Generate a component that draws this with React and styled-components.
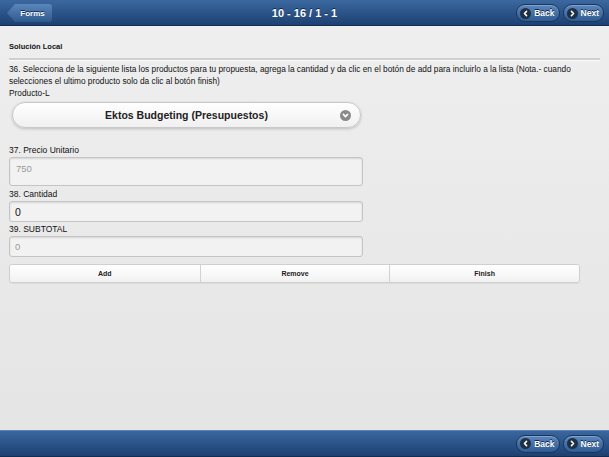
import React from 'react';
import styled, { createGlobalStyle } from 'styled-components';

const GlobalStyle = createGlobalStyle`
  html, body {
    margin: 0;
    padding: 0;
    height: 100%;
  }
  body {
    font-family: "Liberation Sans", Arial, sans-serif;
    background: #e9e9e9;
  }
  #root {
    height: 100%;
  }
`;

const Page = styled.div`
  width: 609px;
  height: 457px;
  display: flex;
  flex-direction: column;
  background: linear-gradient(#efefef, #e4e4e4);
  overflow: hidden;
`;

const Bar = styled.div`
  height: ${p => p.$footer ? '27px' : '26px'};
  flex-shrink: 0;
  display: flex;
  align-items: center;
  justify-content: ${p => p.$footer ? 'flex-end' : 'space-between'};
  padding: 0 5px 0 7px;
  background: linear-gradient(#3a679e, #1d4072);
  border-top: 1px solid ${p => p.$footer ? '#5a84b8' : '#3a679e'};
  border-bottom: 1px solid #132c52;
  box-sizing: border-box;
  position: relative;
`;

const Title = styled.div`
  position: absolute;
  left: 0;
  right: 0;
  text-align: center;
  color: #fff;
  font-weight: bold;
  font-size: 11px;
  text-shadow: 0 -1px 0 #0d2447;
  pointer-events: none;
`;

const BackTab = styled.div`
  position: relative;
  height: 18px;
  width: 45px;
  display: flex;
  align-items: center;
  justify-content: center;
  padding-left: 6px;
  box-sizing: border-box;
  color: #fff;
  font-size: 8px;
  font-weight: bold;
  text-shadow: 0 -1px 0 #0d2447;
  background: linear-gradient(#5a86bd, #2e5a90);
  border-radius: 0 3px 3px 0;
  clip-path: polygon(8px 0, 100% 0, 100% 100%, 8px 100%, 0 50%);
`;

const NavGroup = styled.div`
  display: flex;
  gap: 3px;
  z-index: 1;
`;

const Pill = styled.div`
  height: 18px;
  display: flex;
  align-items: center;
  gap: 3px;
  padding: 0 4px 0 3px;
  box-sizing: border-box;
  border-radius: 9px;
  background: linear-gradient(#5a86bd, #2f5c93);
  border: 1px solid #18365e;
  box-shadow: inset 0 1px 0 rgba(255,255,255,0.25);
  color: #fff;
  font-size: 8.5px;
  font-weight: bold;
  text-shadow: 0 -1px 0 #0d2447;
`;

const Dot = styled.span`
  width: 11px;
  height: 11px;
  border-radius: 50%;
  background: #1f2f45;
  display: flex;
  align-items: center;
  justify-content: center;
`;

const Content = styled.div`
  flex: 1;
  padding: 16px 9px 0 9px;
  color: #111;
`;

const Section = styled.div`
  font-size: 7.5px;
  font-weight: bold;
  padding: 0 0 7px 0;
  border-bottom: 2px solid #cfcfcf;
  box-shadow: 0 1px 0 #fafafa;
`;

const Question = styled.div`
  font-size: 8.3px;
  line-height: 12px;
  margin-top: 3px;
  white-space: nowrap;
`;

const Select = styled.div`
  margin: 3px 0 0 3px;
  width: 349px;
  height: 26px;
  box-sizing: border-box;
  border: 1px solid #c8c8c8;
  border-radius: 13px;
  background: linear-gradient(#ffffff, #f0f0f0);
  box-shadow: 0 1px 3px rgba(0,0,0,0.2);
  display: flex;
  align-items: center;
  justify-content: center;
  position: relative;
  font-size: 10.5px;
  font-weight: bold;
  color: #222;
`;

const Chevron = styled.span`
  position: absolute;
  right: 9px;
  top: 7px;
  width: 11px;
  height: 11px;
  border-radius: 50%;
  background: #8a8a8a;
  display: flex;
  align-items: center;
  justify-content: center;
`;

const Label = styled.div`
  font-size: 8.5px;
  margin-top: ${p => p.$mt || 0}px;
  line-height: 10px;
`;

const Input = styled.div`
  width: 354px;
  height: ${p => p.$h || 21}px;
  box-sizing: border-box;
  margin-top: 2px;
  border: 1px solid #c4c4c4;
  border-radius: 3px;
  background: #f2f2f2;
  box-shadow: inset 0 1px 2px rgba(0,0,0,0.12);
  display: flex;
  align-items: ${p => p.$top ? 'flex-start' : 'center'};
  padding: ${p => p.$top ? '5px 0 0 6px' : '0 0 0 5px'};
  font-size: ${p => p.$muted ? '9.5px' : '10.5px'};
  color: ${p => p.$muted ? '#9a9a9a' : '#111'};
`;

const ButtonRow = styled.div`
  margin-top: 7px;
  width: 569px;
  display: grid;
  grid-template-columns: repeat(3, 1fr);
  border: 1px solid #cfcfcf;
  border-radius: 3px;
  overflow: hidden;
  box-shadow: 0 1px 1px rgba(0,0,0,0.06);
`;

const Btn = styled.div`
  height: 17px;
  display: flex;
  align-items: center;
  justify-content: center;
  font-size: 7px;
  font-weight: bold;
  color: #222;
  background: linear-gradient(#ffffff, #f1f1f1);
  border-left: ${p => p.$first ? 'none' : '1px solid #d2d2d2'};
`;

const Arrow = ({ dir }) => (
  <svg width="7" height="7" viewBox="0 0 10 10">
    <path
      d={dir === 'left' ? 'M6.5 2 L3.5 5 L6.5 8' : 'M3.5 2 L6.5 5 L3.5 8'}
      fill="none"
      stroke="#fff"
      strokeWidth="2.2"
      strokeLinecap="round"
      strokeLinejoin="round"
    />
  </svg>
);

const NavButtons = () => (
  <NavGroup>
    <Pill><Dot><Arrow dir="left" /></Dot>Back</Pill>
    <Pill><Dot><Arrow dir="right" /></Dot>Next</Pill>
  </NavGroup>
);

export default function App() {
  return (
    <>
      <GlobalStyle />
      <Page>
        <Bar>
          <BackTab>Forms</BackTab>
          <Title>10 - 16 / 1 - 1</Title>
          <NavButtons />
        </Bar>
        <Content>
          <Section>Solución Local</Section>
          <Question>
            36. Selecciona de la siguiente lista los productos para tu propuesta, agrega la cantidad y da clic en el botón de add para incluirlo a la lista (Nota.- cuando<br />
            selecciones el ultimo producto solo da clic al botón finish)<br />
            Producto-L
          </Question>
          <Select>
            Ektos Budgeting (Presupuestos)
            <Chevron>
              <svg width="7" height="7" viewBox="0 0 10 10">
                <path d="M2 3.5 L5 6.5 L8 3.5" fill="none" stroke="#fff" strokeWidth="2.4" strokeLinecap="round" strokeLinejoin="round" />
              </svg>
            </Chevron>
          </Select>
          <Label $mt={17}>37. Precio Unitario</Label>
          <Input $h={29} $muted $top>750</Input>
          <Label $mt={3}>38. Cantidad</Label>
          <Input>0</Input>
          <Label $mt={2}>39. SUBTOTAL</Label>
          <Input $muted>0</Input>
          <ButtonRow>
            <Btn $first>Add</Btn>
            <Btn>Remove</Btn>
            <Btn>Finish</Btn>
          </ButtonRow>
        </Content>
        <Bar $footer>
          <NavButtons />
        </Bar>
      </Page>
    </>
  );
}
